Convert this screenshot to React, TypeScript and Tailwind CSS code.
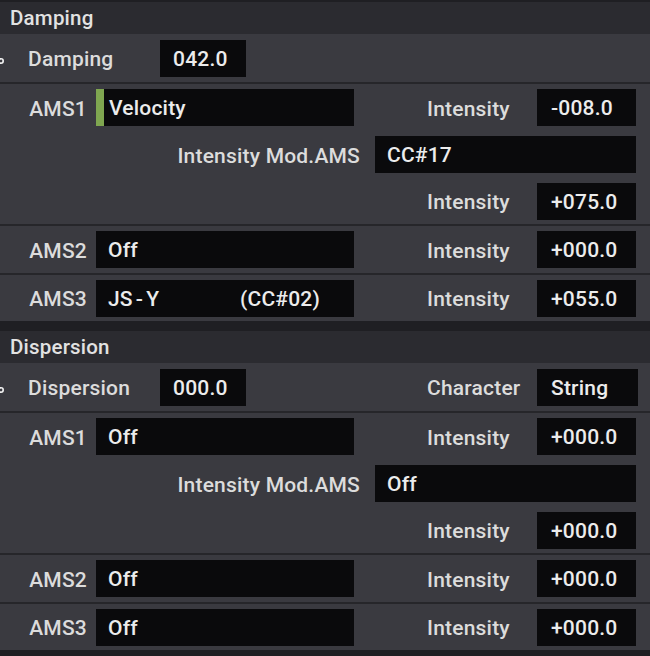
import type { ReactNode } from 'react';

// Synth parameter page: Damping / Dispersion sections

const Box = ({ children, className = '' }: { children?: ReactNode; className?: string }) => (
  <div className={`h-[37px] bg-[#0a0a0c] flex items-center pt-[3px] text-[#ececec] ${className}`}>{children}</div>
);

const Knob = () => (
  <svg width="8" height="8" viewBox="0 0 8 8" className="-ml-[2px] mt-[6px]">
    <circle cx="3" cy="4" r="2.2" fill="none" stroke="#f2f2f2" strokeWidth="1.6" />
  </svg>
);

const Intensity = ({ label = 'Intensity', value, wide = false }: { label?: string; value: string; wide?: boolean }) => (
  <div className={`ml-auto flex items-center ${wide ? 'mr-[12px]' : 'mr-[14px]'}`}>
    <div className="w-[110px] pt-[4px]">{label}</div>
    <Box className={wide ? 'w-[101px] pl-[14px]' : 'w-[99px] pl-[14px]'}>{value}</Box>
  </div>
);

const Sep = () => <div className="h-[2px] bg-[#26262a]" />;

const AmsRow = ({ name, value, amount, h = 'h-[47px]', accent = false }: { name: string; value: ReactNode; amount: string; h?: string; accent?: boolean }) => (
  <div className={`${h} flex items-center`}>
    <div className="w-[87px] text-right pt-[4px]">{name}</div>
    <Box className="ml-[9px] w-[258px] !pt-0">
      {accent ? <div className="w-[8px] h-full bg-[#7fa650] mr-[5px]" /> : <div className="w-[12px]" />}
      <div className="flex pt-[3px]">{value}</div>
    </Box>
    <Intensity value={amount} />
  </div>
);

const ModRows = ({ mod, amount }: { mod: string; amount: string }) => (
  <>
    <div className="h-[47px] flex items-center">
      <div className="w-[360px] text-right pt-[4px]">Intensity Mod.AMS</div>
      <Box className="ml-[15px] w-[261px] pl-[12px]">{mod}</Box>
    </div>
    <div className="h-[46px] flex items-center">
      <Intensity value={amount} />
    </div>
  </>
);

const Header = ({ title }: { title: string }) => (
  <div className="h-[32px] bg-[#2b2b30] flex items-center pl-[10px] text-[#e2e2e2] text-[20.5px]">{title}</div>
);

const MainRow = ({ label, value, extra }: { label: string; value: string; extra?: ReactNode }) => (
  <div className="h-[48px] flex items-center">
    <div className="w-[28px] flex items-center"><Knob /></div>
    <div className="w-[132px] pt-[4px]">{label}</div>
    <Box className="w-[86px] pl-[13px]">{value}</Box>
    {extra}
  </div>
);

export default function App() {
  return (
    <div
      className="w-[650px] h-[656px] bg-[#1f1f23] text-[21px] font-medium tracking-[0.2px] text-[#dcdcdc] overflow-hidden"
      style={{ fontFamily: 'Roboto, "Liberation Sans", sans-serif' }}
    >
      <div className="h-[2px]" />
      <Header title="Damping" />
      <div className="bg-[#3a3a40]">
        <MainRow label="Damping" value="042.0" />
        <Sep />
        <AmsRow name="AMS1" value="Velocity" amount="-008.0" accent />
        <ModRows mod="CC#17" amount="+075.0" />
        <Sep />
        <AmsRow name="AMS2" value="Off" amount="+000.0" />
        <Sep />
        <AmsRow
          name="AMS3"
          h="h-[46px]"
          value={
            <>
              <span className="w-[132px]">JS<span className="mx-[3px]">-</span>Y</span>
              <span>(CC#02)</span>
            </>
          }
          amount="+055.0"
        />
      </div>
      <div className="h-[10px]" />
      <Header title="Dispersion" />
      <div className="bg-[#3a3a40]">
        <MainRow label="Dispersion" value="000.0" extra={<Intensity label="Character" value="String" wide />} />
        <Sep />
        <AmsRow name="AMS1" value="Off" amount="+000.0" />
        <ModRows mod="Off" amount="+000.0" />
        <Sep />
        <AmsRow name="AMS2" value="Off" amount="+000.0" />
        <Sep />
        <AmsRow name="AMS3" value="Off" amount="+000.0" h="h-[46px]" />
      </div>
    </div>
  );
}
